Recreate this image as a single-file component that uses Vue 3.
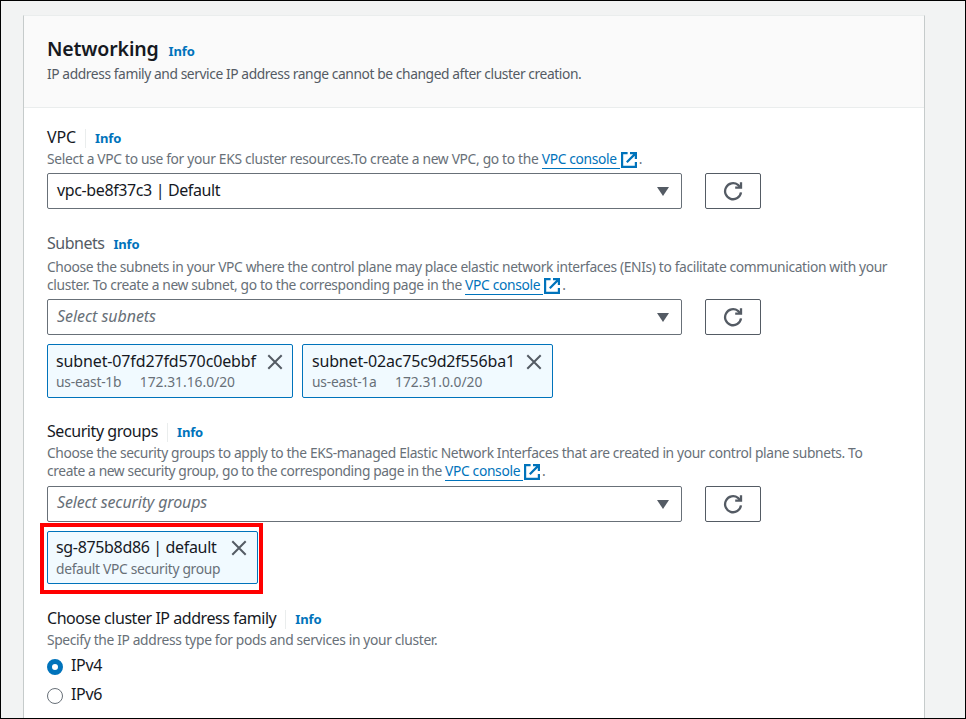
<script setup>
import { h } from 'vue'

const RefreshIcon = () => h('svg', { width: 20, height: 20, viewBox: '0 0 20 20', fill: 'none', stroke: '#545b64', 'stroke-width': 2.3 }, [
  h('path', { d: 'M18 11.4A8 8 0 1 1 15 3.9L17 6' }),
  h('path', { d: 'M12.2 6.6h5.8V1.2' }),
])
const ExternalIcon = () => h('svg', { width: 16, height: 16, viewBox: '0 0 16 16', fill: 'none', stroke: '#0073bb', 'stroke-width': 2.2 }, [
  h('path', { d: 'M6.6 1.1H1.1v13.8h13.8v-5' }),
  h('path', { d: 'M9 1.1h5.9v5.8M14.6 1.4L5.8 10.2' }),
])
const CloseIcon = () => h('svg', { width: 16, height: 16, viewBox: '0 0 16 16', fill: 'none', stroke: '#545b64', 'stroke-width': 2 }, [
  h('path', { d: 'M1.3 1.3l13.4 13.4M14.7 1.3L1.3 14.7' }),
])
</script>

<template>
  <main class="page">
    <section class="card">
      <header class="head">
        <div class="title-row"><h1>Networking</h1><a class="info">Info</a></div>
        <p class="desc intro">IP address family and service IP address range cannot be changed after cluster creation.</p>
      </header>
      <div class="body">
        <div class="field vpc">
          <div class="label"><span class="name n-vpc">VPC</span><i class="divider"></i><a class="info">Info</a></div>
          <p class="desc d-vpc">Select a VPC to use for your EKS cluster resources.To create a new VPC, go to the <a class="link">VPC console</a><ExternalIcon class="ext" />.</p>
          <div class="control">
            <div class="select"><span class="p-vpc">vpc-be8f37c3 | Default</span><i class="caret"></i></div>
            <button><RefreshIcon /></button>
          </div>
        </div>

        <div class="field subnets">
          <div class="label muted"><span class="name n-sub">Subnets</span><a class="info">Info</a></div>
          <p class="desc d-sub">Choose the subnets in your VPC where the control plane may place elastic network interfaces (ENIs) to facilitate communication with your<br />cluster. To create a new subnet, go to the corresponding page in the <a class="link">VPC console</a><ExternalIcon class="ext" />.</p>
          <div class="control">
            <div class="select placeholder"><span class="p-sub">Select subnets</span><i class="caret"></i></div>
            <button><RefreshIcon /></button>
          </div>
          <div class="tokens">
            <div class="token t1">
              <div class="token-top"><span>subnet-07fd27fd570c0ebbf</span><CloseIcon /></div>
              <div class="token-sub"><span class="zone">us-east-1b</span><span class="cidr">172.31.16.0/20</span></div>
            </div>
            <div class="token t2">
              <div class="token-top"><span>subnet-02ac75c9d2f556ba1</span><CloseIcon /></div>
              <div class="token-sub"><span class="zone">us-east-1a</span><span class="cidr">172.31.0.0/20</span></div>
            </div>
          </div>
        </div>

        <div class="field groups">
          <div class="label"><span class="name n-sg">Security groups</span><i class="divider"></i><a class="info">Info</a></div>
          <p class="desc d-sg"><span>Choose the security groups to apply to the EKS-managed Elastic Network Interfaces that are created in your control plane subnets. To</span><br /><span class="d-sg2">create a new security group, go to the corresponding page in the </span><a class="link">VPC console</a><ExternalIcon class="ext" />.</p>
          <div class="control">
            <div class="select placeholder"><span class="p-sg">Select security groups</span><i class="caret"></i></div>
            <button><RefreshIcon /></button>
          </div>
          <div class="tokens">
            <div class="token t3">
              <div class="token-top"><span>sg-875b8d86 | default</span><CloseIcon /></div>
              <div class="token-sub"><span class="group">default VPC security group</span></div>
              <i class="highlight"></i>
            </div>
          </div>
        </div>

        <div class="field family">
          <div class="label"><span class="name n-fam">Choose cluster IP address family</span><i class="divider"></i><a class="info">Info</a></div>
          <p class="desc d-fam">Specify the IP address type for pods and services in your cluster.</p>
          <div class="radios">
            <div class="radio"><i class="dot on"></i><span>IPv4</span></div>
            <div class="radio"><i class="dot"></i><span>IPv6</span></div>
          </div>
        </div>
      </div>
    </section>
  </main>
</template>

<style>
body { margin: 0; }
</style>

<style scoped>
* { box-sizing: border-box; }
.page {
  height: 719px;
  overflow: hidden;
  padding: 14px 40px 0 22px;
  border: 1px solid #000;
  background: #f2f3f3;
  color: #16191f;
  font: 16px/22px "Noto Sans", "Open Sans", sans-serif;
}
.card { width: 902px; height: 720px; background: #fff; border: 1px solid #c6cbcb; border-top-color: #eaeded; }
.head { height: 92px; padding: 20px 23px 0; background: #fafafa; border-bottom: 1px solid #eaeded; }
.title-row { display: flex; align-items: baseline; gap: 10px; height: 26px; }
h1 { margin: 0; font-size: 19.5px; line-height: 26px; font-weight: 650; letter-spacing: -0.15px; }
.info { color: #0073bb; font-size: 13px; font-weight: 700; letter-spacing: -0.15px; }
.desc { margin: 0; color: #687078; font-size: 13.8px; line-height: 18px; white-space: nowrap; }
.intro { margin-top: 3px; color: #545b64; letter-spacing: -0.415px; }
.body { padding: 19px 23px 0; }
.label { display: flex; align-items: center; height: 22px; }
.name { padding-bottom: 2px; }
.label.muted { color: #545b64; }
.label.muted .info { margin-left: 9px; }
.divider { width: 1px; height: 19px; margin: 0 9px; background: #eaeded; }
.n-vpc { letter-spacing: -0.1px; }
.n-sub { letter-spacing: -0.5px; }
.n-sg { letter-spacing: -0.43px; }
.n-fam { letter-spacing: -0.45px; }
.d-vpc { margin-top: 1px; letter-spacing: -0.32px; }
.d-sub { margin-top: 3px; letter-spacing: -0.357px; }
.d-sg { margin-top: 1px; letter-spacing: -0.356px; }
.d-sg2 { letter-spacing: -0.4px; }
.d-fam { margin-top: 1px; letter-spacing: -0.345px; }
.link { display: inline-block; height: 19px; margin-bottom: -1px; padding-right: 3px; color: #0073bb; border-bottom: 1px solid #0073bb; letter-spacing: -0.33px; vertical-align: top; }
.ext { margin: 0 2px 0 1px; vertical-align: -4px; }
.control { display: flex; gap: 23px; margin-top: 5px; }
.groups .control { margin-top: 6px; }
.select { display: flex; align-items: center; justify-content: space-between; width: 635px; height: 36px; padding: 0 12px 3px 9px; border: 1px solid #687078; border-radius: 2px; }
.placeholder { color: #687078; font-style: italic; }
.p-vpc { letter-spacing: -0.38px; }
.p-sub { letter-spacing: -0.06px; }
.p-sg { letter-spacing: -0.16px; }
.groups .select { padding-bottom: 4px; }
.groups .caret { margin-top: 5px; }
.caret { width: 12px; height: 9px; margin-top: 4px; background: #545b64; clip-path: polygon(0 0, 100% 0, 50% 100%); }
button { display: flex; align-items: center; justify-content: center; width: 56px; height: 36px; padding: 0; background: #fff; border: 1px solid #545b64; border-radius: 2px; }
.tokens { display: flex; gap: 9px; margin-top: 9px; }
.token { position: relative; height: 54px; padding: 6px 9px 0 8px; background: #f1faff; border: 1px solid #0073bb; border-radius: 2px; }
.token-top { display: flex; align-items: center; justify-content: space-between; height: 22px; }
.token-top span { padding-bottom: 2px; }
.token-sub { display: flex; gap: 18.5px; color: #687078; font-size: 13.8px; line-height: 18px; }
.t1 { width: 246px; }
.t2 { width: 251px; padding-left: 9px; padding-right: 10px; }
.t3 { width: 211px; height: 53px; padding-top: 5px; padding-right: 10px; }
.t3 .token-sub { margin-top: 1px; }
.t1 .token-top { letter-spacing: -0.13px; }
.t2 .token-top { letter-spacing: -0.18px; }
.t3 .token-top { letter-spacing: -0.34px; }
.zone { letter-spacing: -0.22px; }
.cidr { letter-spacing: 0; }
.group { letter-spacing: -0.3px; }
.highlight { position: absolute; inset: -9px -6px -11px -8px; border: 4px solid #f00; }
.subnets { margin-top: 24px; }
.groups { margin-top: 23px; }
.family { margin-top: 24px; }
.radios { display: grid; gap: 7px; margin-top: 6px; }
.radio { display: flex; align-items: center; gap: 8px; height: 22px; letter-spacing: -0.3px; }
.radio span { padding-bottom: 2px; }
.dot { width: 16px; height: 16px; margin-top: 1px; border: 1px solid #687078; border-radius: 50%; }
.dot.on { border: 5px solid #0073bb; }
</style>
